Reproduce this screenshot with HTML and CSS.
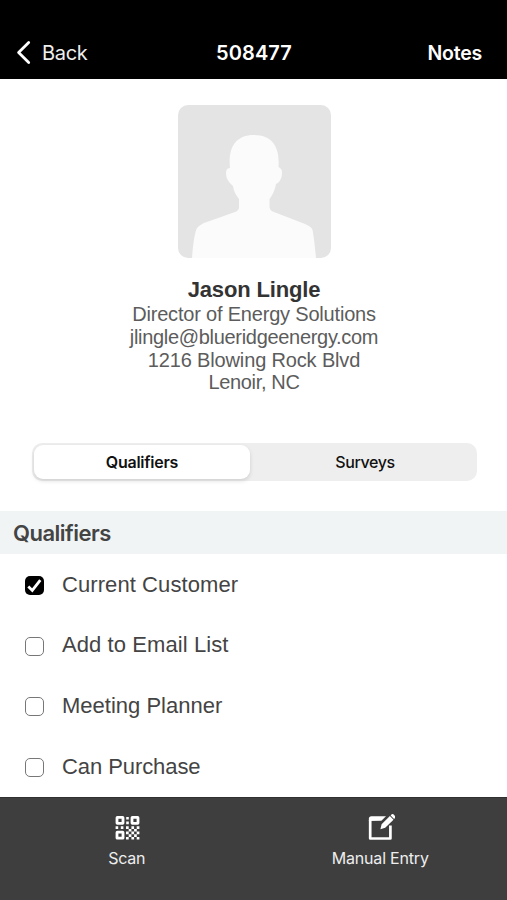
FILE: index.html
```html
<!DOCTYPE html>
<html lang="en">
<head>
<meta charset="utf-8">
<title>508477</title>
<link rel="stylesheet" href="styles.css">
</head>
<body>
<div class="app">
  <header class="nav">
    <a class="nav-back"><svg class="chevron" viewBox="0 0 16 26" width="16" height="26"><path d="M13.700 2.500 3.600 12.500l10.100 10"/></svg><span>Back</span></a>
    <h1 class="nav-title">508477</h1>
    <a class="nav-notes">Notes</a>
  </header>
  <main class="content">
    <section class="profile">
      <svg class="avatar" viewBox="0 0 153 153" width="153" height="153">
        <rect width="153" height="153" rx="10" fill="#e4e4e4"/>
        <path fill="#fbfbfb" d="M14 153C15 141 16 131 18.500 124Q20 121 26 118L57 107Q61 105.500 61 102V94C58 90 55.500 86 55 81C49 76 47 71 48.500 65Q49.500 63 52 63C50 43 57 30 76 30S102 43 100.500 62Q104 64 104 67C104 73 102 77 98 79C97 85 94 91 91.500 94V102Q92 106 96 107L127 119Q134 122 134.500 125C136 133 137 142 138 153Z"/>
      </svg>
      <h2 class="name">Jason Lingle</h2>
      <p class="line role">Director of Energy Solutions</p>
      <p class="line email">jlingle@blueridgeenergy.com</p>
      <p class="line street">1216 Blowing Rock Blvd</p>
      <p class="line city">Lenoir, NC</p>
    </section>
    <div class="segments">
      <button class="segment active">Qualifiers</button>
      <button class="segment">Surveys</button>
    </div>
    <h3 class="section-title">Qualifiers</h3>
    <ul class="list">
      <li class="row"><span class="box checked"><svg viewBox="0 0 19 19" width="19" height="19"><path d="m3.300 10.500 4 3.900 8-10.300"/></svg></span><span class="customer">Current Customer</span></li>
      <li class="row"><span class="box"></span><span class="email-list">Add to Email List</span></li>
      <li class="row"><span class="box"></span><span>Meeting Planner</span></li>
      <li class="row"><span class="box"></span><span class="purchase">Can Purchase</span></li>
    </ul>
  </main>
  <footer class="tabs">
    <a class="tab">
      <svg class="tab-icon" viewBox="0 0 28 28" width="28" height="28">
        <g fill="none" stroke="#fff" stroke-width="2.800"><rect x="4" y="4.400" width="6" height="6" rx=".3"/><rect x="19" y="4.400" width="6" height="6" rx=".3"/><rect x="4" y="19.200" width="6" height="6" rx=".3"/></g>
        <g fill="#fff">
        <path d="M13.200 4h2.600v2.600h-2.600zM13.200 8.600h2.600v2.600h-2.600zM2.600 13.300h2.600v2.600H2.600zM7.800 13.300h2.600v2.600H7.800z"/>
        <path d="M13 13.200h2.700v2.700H13zM18.400 13.200h2.700v2.700h-2.700zM23.700 13.200h2.700v2.700h-2.700zM15.700 15.900h2.700v2.700h-2.700zM21.100 15.900h2.700v2.700h-2.700zM13 18.600h2.700v2.700H13zM18.400 18.600h2.700v2.700h-2.700zM23.700 18.600h2.700v2.700h-2.700zM15.700 21.200h2.700v2.700h-2.700zM21.100 21.200h2.700v2.700h-2.700zM13 23.900h2.700v2.700H13zM18.400 23.900h2.700v2.700h-2.700zM23.700 23.900h2.700v2.700h-2.700z"/></g>
      </svg>
      <span class="scan">Scan</span>
    </a>
    <a class="tab">
      <svg class="tab-icon edit" viewBox="0 0 30 28" width="30" height="28">
        <path fill="none" stroke="#fff" stroke-width="2.700" stroke-linejoin="round" d="M25.400 12.500v13H5.200V7"/>
        <path fill="#fff" d="M3.850 8V5.800q0-2.500 2.500-2.500H21l-4.600 4.500z"/>
        <path fill="#fff" d="m15.400 16.200 1.200-5 8.300-8.100 3.600 3.600-8.300 8.100zM25.600 2.400l1.100-1.100q.8-.8 1.700 0l1.800 1.800q.7.900 0 1.700l-1.100 1.100z"/>
      </svg>
      <span class="manual">Manual Entry</span>
    </a>
  </footer>
</div>
</body>
</html>
```
FILE: styles.css
```css
* { box-sizing: border-box; }
body { margin: 0; background: #fff; color: #444; font-family: "Liberation Sans", Arial, sans-serif; }
h1, h2, h3, p, ul { margin: 0; padding: 0; }
.app { display: flex; flex-direction: column; width: 507px; height: 900px; overflow: hidden; }
.nav { display: grid; grid-template-columns: 1fr auto 1fr; align-items: center; height: 79px; padding: 26px 25px 0 15px; flex: none; background: #000; color: #fff; font: 500 20px/24px Inter, sans-serif; }
.nav-back { display: flex; align-items: center; gap: 11px; font-weight: 400; letter-spacing: -.3px; color: #eee; }
.chevron { fill: none; stroke: #fff; stroke-width: 2.8; stroke-linecap: round; stroke-linejoin: round; }
.nav-title { font-size: 20px; font-weight: 600; padding-left: 11px; letter-spacing: .1px; }
.nav-notes { justify-self: end; font-weight: 600; font-size: 19.5px; letter-spacing: -.2px; }
.content { flex: 1; min-height: 0; overflow: hidden; }
.profile { display: flex; flex-direction: column; align-items: center; padding: 26px 0 0 1px; }
.avatar { display: block; }
.name { margin-top: 19px; margin-bottom: 1px; font-size: 22px; line-height: 25px; letter-spacing: -.15px; color: #333; }
.line { font-size: 20px; line-height: 22.8px; letter-spacing: -.15px; color: #5c5c5c; white-space: nowrap; }
.role { letter-spacing: -.19px; }
.email { letter-spacing: -.31px; }
.city { letter-spacing: -.35px; }
.segments { display: flex; width: 445px; height: 38px; margin: 49px 0 0 32px; padding: 2px; border-radius: 10px; background: #eee; }
.segment { flex: 1; border: 0; padding: 0 0 0 5px; border-radius: 9px; background: none; color: #111; font: 500 16px/20px Inter, sans-serif; letter-spacing: -.4px; }
.segment.active { flex: 0 0 216px; padding: 0; background: #fff; box-shadow: 0 2px 4px rgba(0, 0, 0, .13); font-weight: 600; letter-spacing: -.25px; }
.section-title { height: 43px; margin-top: 30px; padding-left: 13px; background: #f1f4f4; color: #444; font: 600 22px/44px Inter, sans-serif; letter-spacing: -.5px; }
.list { list-style: none; padding-top: 1px; }
.row { display: flex; align-items: center; gap: 18px; height: 60.7px; padding-left: 25px; font-size: 22px; line-height: 26px; }
.row > span:last-child { margin-top: -2px; }
.customer, .email-list { letter-spacing: .08px; }
.purchase { letter-spacing: -.08px; }
.box { display: block; width: 19px; height: 19px; flex: none; border: 1.2px solid #777; border-radius: 5px; }
.box.checked { border: 0; background: #000; }
.box svg { display: block; fill: none; stroke: #fff; stroke-width: 2.8; }
.tabs { display: grid; grid-template-columns: 1fr 1fr; height: 103px; flex: none; background: #3e3e3e; color: #eee; border-top: 1px solid #303030; font: 400 16px/20px Inter, sans-serif; }
.tab { display: flex; flex-direction: column; align-items: center; padding-top: 15px; gap: 7px; }
.tab-icon { display: block; }
.scan { letter-spacing: -.2px; }
.manual { letter-spacing: -.2px; }
```
